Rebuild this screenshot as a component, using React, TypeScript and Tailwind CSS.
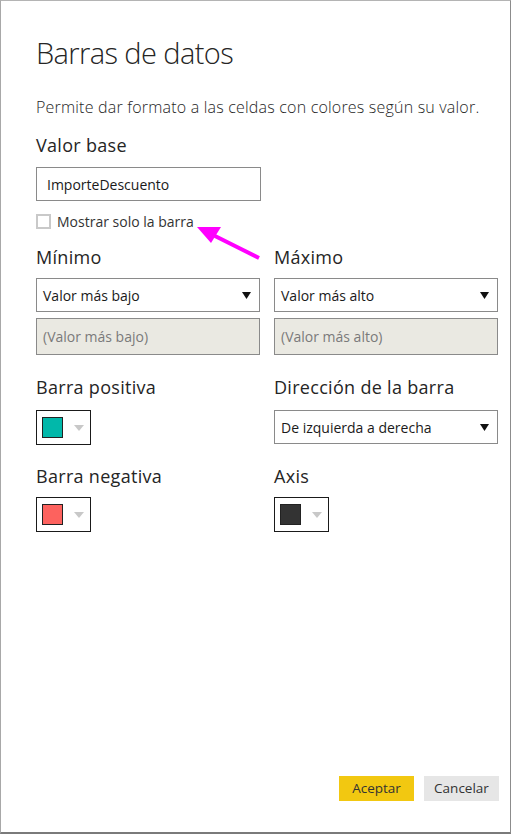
import React from "react";

const font = { fontFamily: '"Open Sans", "Noto Sans", sans-serif' };

function Caret() {
  return (
    <svg width="9" height="7" viewBox="0 0 9 7" className="shrink-0">
      <path d="M0 0 H9 L4.5 7 Z" fill="#111" />
    </svg>
  );
}

function Select({ value }: { value: string }) {
  return (
    <div className="flex items-center justify-between h-[34px] border border-[#8a8a8a] bg-white pl-[6px] pr-[8px]">
      <span className="text-[14px] text-[#1a1a1a]">{value}</span>
      <Caret />
    </div>
  );
}

function ReadOnly({ value }: { value: string }) {
  return (
    <div className="flex items-center h-[37px] border border-[#8a8a8a] bg-[#eae9e2] pl-[6px] mt-[6px]">
      <span className="text-[14px] text-[#7a7a7a]">{value}</span>
    </div>
  );
}

function ColorPicker({ color }: { color: string }) {
  return (
    <div className="flex items-center w-[55px] h-[35px] border border-[#1a1a1a] bg-white pl-[5px]">
      <div className="w-[21px] h-[21px] border border-[#222]" style={{ background: color }} />
      <svg width="10" height="6" viewBox="0 0 10 6" className="ml-[11px]">
        <path d="M0 0 H10 L5 6 Z" fill="#c8c8c8" />
      </svg>
    </div>
  );
}

function Label({ children }: { children: React.ReactNode }) {
  return (
    <div className="text-[18px] leading-[24px] tracking-[0.3px] text-[#252525] font-normal">{children}</div>
  );
}

export default function App() {
  return (
    <div
      style={font}
      className="relative w-[511px] h-[834px] bg-white border-l border-t border-r border-b-2 border-l-[#a8a8a8] border-t-[#b4b4b4] border-r-[#8c8c8c] border-b-[#7a7a7a] overflow-hidden"
    >
      <div className="pl-[35px] pr-[12px] pt-[30px]">
        <h1 className="text-[29px] leading-[44px] tracking-[-0.6px] font-light text-[#252525]">
          Barras de datos
        </h1>
        <p className="mt-[20px] text-[16px] leading-[24px] tracking-[0.2px] font-light text-[#252525]">
          Permite dar formato a las celdas con colores según su valor.
        </p>

        <div className="mt-[14px]">
          <Label>Valor base</Label>
        </div>
        <div className="mt-[10px] w-[225px] h-[34px] border border-[#8a8a8a] flex items-center pl-[10px]">
          <span className="text-[14px] text-[#1a1a1a]">ImporteDescuento</span>
        </div>
        <div className="mt-[10px] flex items-center gap-[6px]">
          <div className="w-[15px] h-[15px] border-2 border-[#c9c9c9] bg-white" />
          <span className="text-[14px] text-[#333]">Mostrar solo la barra</span>
        </div>

        <div className="grid grid-cols-2 gap-x-[14px] mt-[13px]">
          <div>
            <Label>Mínimo</Label>
            <div className="mt-[9px]">
              <Select value="Valor más bajo" />
              <ReadOnly value="(Valor más bajo)" />
            </div>
          </div>
          <div>
            <Label>Máximo</Label>
            <div className="mt-[9px]">
              <Select value="Valor más alto" />
              <ReadOnly value="(Valor más alto)" />
            </div>
          </div>

          <div className="mt-[20px]">
            <Label>Barra positiva</Label>
            <div className="mt-[11px]">
              <ColorPicker color="#01b8aa" />
            </div>
          </div>
          <div className="mt-[20px]">
            <Label>Dirección de la barra</Label>
            <div className="mt-[11px]">
              <Select value="De izquierda a derecha" />
            </div>
          </div>

          <div className="mt-[19px]">
            <Label>Barra negativa</Label>
            <div className="mt-[9px]">
              <ColorPicker color="#fd625e" />
            </div>
          </div>
          <div className="mt-[19px]">
            <Label>Axis</Label>
            <div className="mt-[9px]">
              <ColorPicker color="#333333" />
            </div>
          </div>
        </div>
      </div>

      <div className="absolute right-[11px] bottom-[31px] flex gap-[10px]">
        <button className="w-[75px] h-[25px] bg-[#f2c811] text-[13.5px] text-[#333]">Aceptar</button>
        <button className="w-[75px] h-[25px] bg-[#e6e6e6] text-[13.5px] text-[#333]">Cancelar</button>
      </div>

      <svg className="absolute left-[190px] top-[220px]" width="80" height="45" viewBox="0 0 80 45">
        <line x1="68" y1="37" x2="20" y2="13" stroke="#ff00ff" strokeWidth="4" />
        <path d="M6 6 L30 6 L20 22 Z" fill="#ff00ff" />
      </svg>
    </div>
  );
}
